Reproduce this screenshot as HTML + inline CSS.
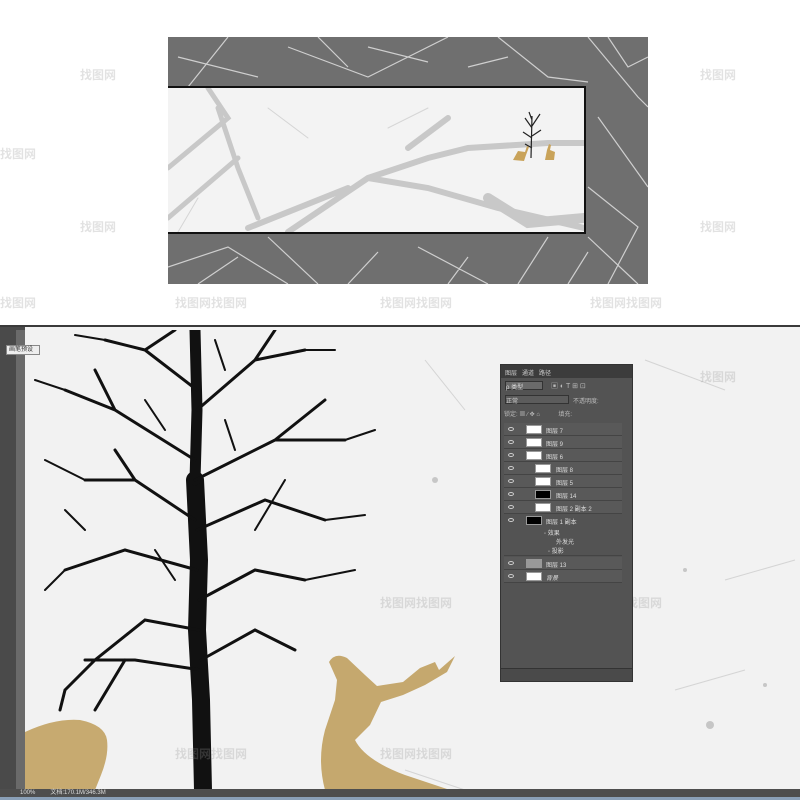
<!DOCTYPE html>
<html><head><meta charset="utf-8"><style>
*{margin:0;padding:0;box-sizing:border-box}
body{width:800px;height:800px;overflow:hidden;background:#fff;position:relative;font-family:"Liberation Sans","Noto Sans CJK SC",sans-serif}
.abs{position:absolute}
.wm{position:absolute;color:rgba(150,150,150,.28);font-size:12px;font-weight:bold}
.row{position:absolute;left:3px;width:118px;height:13px;border-bottom:1px solid #444;font-size:6px;color:#ddd;background:#595959}
.eye{position:absolute;left:4px;top:4px;width:6px;height:4px;border:1px solid #ccc;border-radius:50%}
.th{position:absolute;top:2px;width:16px;height:9px;background:#fff;border:1px solid #999}
</style></head><body>
<!-- top marble -->
<div class="abs" style="left:168px;top:37px;width:480px;height:247px;background:#6f6f6f"></div>
<svg class="abs" style="left:168px;top:37px" width="480" height="247" stroke="#cfcfcf" fill="none" stroke-width="1.2">
<path d="M420 0 L470 60 L480 70 M430 80 L480 150 M420 150 L470 190 L440 247 M420 200 L470 247 M60 0 L20 50 M120 10 L200 40 L280 0 M330 0 L380 40 L420 45 M250 210 L320 247 M100 200 L150 247 M0 230 L60 210 L120 247 M380 200 L350 247 M440 0 L460 30 L480 20 M10 20 L90 40 M150 0 L180 30 M200 10 L260 25 M300 30 L340 20 M30 247 L70 220 M180 247 L210 215 M280 247 L300 220 M400 247 L420 215"/>
</svg>
<div class="abs" style="left:168px;top:86px;width:418px;height:148px;background:#f3f3f3;border:2px solid #111;border-left:none"></div>
<svg class="abs" style="left:168px;top:88px" width="416" height="144" stroke="#c8c8c8" fill="none" stroke-linecap="round">
<path d="M0 80 L60 30 L40 0 M50 20 L70 80 L90 130 M0 130 L70 70" stroke-width="5"/>
<path d="M120 144 L200 90 L260 70 L300 60 L380 55 L416 55 M200 90 L260 100 L330 120 L416 140 M80 140 L180 100 M240 60 L280 30" stroke-width="6"/>
<path d="M320 110 L360 135 L416 130" stroke-width="10"/>
<path d="M100 20 L140 50 M30 110 L10 144 M220 40 L260 20" stroke-width="1" stroke="#d5d5d5"/>
</svg>
<svg class="abs" style="left:505px;top:108px" width="60" height="60"><path d="M26 50 L27 8 M27 20 L20 10 M27 18 L35 6 M27 30 L18 24 M27 28 L36 22 M27 12 L24 4 M27 40 L20 36" stroke="#222" stroke-width="1.2" fill="none"/><path d="M8 52 l5 -9 l7 1 l2 -6 l2 1 l-3 8 l-2 6z M40 52 l2 -10 l2 -6 l2 1 l-1 5 l5 2 l-1 8z" fill="#c9a35a"/></svg>
<!-- bottom -->
<div class="abs" style="left:0;top:325px;width:800px;height:2px;background:#3a3a3a"></div>
<div class="abs" style="left:0;top:327px;width:800px;height:470px;background:#f2f2f2"></div>
<div class="abs" style="left:0;top:327px;width:25px;height:462px;background:#4a4a4a"></div>
<div class="abs" style="left:16px;top:330px;width:9px;height:459px;background:#6a6a6a"></div>
<div class="abs" style="left:6px;top:345px;width:34px;height:10px;background:#eee;border:1px solid #888;font-size:6px;color:#333;line-height:8px;padding-left:2px">画笔预设</div>
<svg class="abs" style="left:25px;top:330px" width="775" height="460">
<g fill="#aaa" opacity=".6"><circle cx="410" cy="150" r="3"/><circle cx="685" cy="395" r="4"/><circle cx="740" cy="355" r="2"/><circle cx="660" cy="240" r="2"/></g>
<g stroke="#c8c8c8" fill="none" stroke-width="1" opacity=".7"><path d="M620 30 L700 60 M400 30 L440 80 M700 250 L770 230 M380 440 L440 460 M650 360 L720 340"/></g>
<g stroke="#111" fill="none" stroke-linecap="round">
<path d="M178 460 L176 370 L172 300 L174 230 L170 150" stroke-width="18"/>
<path d="M170 150 L172 80 L170 0" stroke-width="11"/>
<path d="M172 60 L120 20 M172 80 L230 30 L280 20 M170 130 L90 80 L40 60 M170 150 L250 110 L320 110 M170 190 L110 150 L60 150 M172 200 L240 170 L300 190 M172 240 L100 220 L40 240 M174 270 L230 240 L280 250 M174 300 L120 290 L70 330 L40 360 M176 340 L110 330 L60 330 M176 330 L230 300 L270 320 M120 20 L80 10 M230 30 L250 0 M120 20 L150 0 M90 80 L70 40 M250 110 L300 70 M110 150 L90 120 M40 360 L35 380 M100 330 L70 380" stroke-width="3"/>
<path d="M40 60 L10 50 M60 150 L20 130 M300 190 L340 185 M280 250 L330 240 M80 10 L50 5 M280 20 L310 20 M320 110 L350 100 M40 240 L20 260 M200 40 L190 10 M210 120 L200 90 M140 100 L120 70 M60 200 L40 180 M230 200 L260 150 M150 250 L130 220" stroke-width="2"/>
</g>
<path d="M0 402 Q30 388 55 390 Q80 395 82 410 Q84 425 76 445 L70 460 L0 460z" fill="#c7aa70"/>
<path d="M304 332 Q310 322 322 328 L340 345 L352 356 L378 352 L395 338 L410 332 L414 340 L430 326 L422 342 L400 355 L378 365 L356 372 L345 395 L330 410 Q340 430 380 445 L425 460 L300 460 Q292 430 300 400 L310 370 L312 350z" fill="#c5a86e"/>
</svg>
<!-- watermarks -->
<div class="wm" style="left:80px;top:66px">找图网</div><div class="wm" style="left:700px;top:66px">找图网</div>
<div class="wm" style="left:0;top:145px">找图网</div><div class="wm" style="left:80px;top:218px">找图网</div>
<div class="wm" style="left:0;top:294px">找图网</div><div class="wm" style="left:175px;top:294px">找图网找图网</div>
<div class="wm" style="left:380px;top:294px">找图网找图网</div><div class="wm" style="left:590px;top:294px">找图网找图网</div>
<div class="wm" style="left:700px;top:218px">找图网</div><div class="wm" style="left:700px;top:368px">找图网</div>
<div class="wm" style="left:380px;top:594px">找图网找图网</div><div class="wm" style="left:590px;top:594px">找图网找图网</div>
<div class="wm" style="left:175px;top:745px">找图网找图网</div><div class="wm" style="left:380px;top:745px">找图网找图网</div>
<!-- layers panel -->
<div class="abs" style="left:500px;top:364px;width:133px;height:318px;background:#535353;border:1px solid #333">
<div class="abs" style="left:0;top:0;width:131px;height:13px;background:#3c3c3c;font-size:6px;color:#ccc;padding:3px 4px">图层 &nbsp; 通道 &nbsp; 路径</div>
<div class="abs" style="left:4px;top:16px;width:38px;height:9px;background:#6a6a6a;border:1px solid #333;font-size:6px;color:#ddd">ρ 类型</div>
<div class="abs" style="left:50px;top:16px;font-size:7px;color:#bbb">▣ ◐ T ⊞ ⊡</div>
<div class="abs" style="left:4px;top:30px;width:64px;height:9px;background:#5c5c5c;border:1px solid #333;font-size:6px;color:#ccc">正常</div>
<div class="abs" style="left:72px;top:31px;font-size:6px;color:#bbb">不透明度:</div>
<div class="abs" style="left:3px;top:44px;font-size:6px;color:#bbb">锁定: ▦ ∕ ✥ ⌂ &nbsp; &nbsp; &nbsp; &nbsp; &nbsp; 填充:</div>
<div class="row" style="top:58px"><span class="eye"></span><span class="th" style="left:22px"></span><span class="abs" style="left:42px;top:3px">图层 7</span></div>
<div class="row" style="top:71px"><span class="eye"></span><span class="th" style="left:22px"></span><span class="abs" style="left:42px;top:3px">图层 9</span></div>
<div class="row" style="top:84px"><span class="eye"></span><span class="th" style="left:22px"></span><span class="abs" style="left:42px;top:3px">图层 6</span></div>
<div class="row" style="top:97px"><span class="eye"></span><span class="th" style="left:31px"></span><span class="abs" style="left:52px;top:3px">图层 8</span></div>
<div class="row" style="top:110px"><span class="eye"></span><span class="th" style="left:31px"></span><span class="abs" style="left:52px;top:3px">图层 5</span></div>
<div class="row" style="top:123px"><span class="eye"></span><span class="th" style="left:31px;background:#000"></span><span class="abs" style="left:52px;top:3px">图层 14</span></div>
<div class="row" style="top:136px"><span class="eye"></span><span class="th" style="left:31px"></span><span class="abs" style="left:52px;top:3px">图层 2 副本 2</span></div>
<div class="row" style="top:149px;height:42px;background:#535353"><span class="eye"></span><span class="th" style="left:22px;background:#000"></span><span class="abs" style="left:42px;top:3px">图层 1 副本</span><span class="abs" style="left:40px;top:14px">◦ 效果</span><span class="abs" style="left:52px;top:23px">外发光</span><span class="abs" style="left:44px;top:32px">◦ 投影</span></div>
<div class="row" style="top:192px"><span class="eye"></span><span class="th" style="left:22px;background:#999"></span><span class="abs" style="left:42px;top:3px">图层 13</span></div>
<div class="row" style="top:205px"><span class="eye"></span><span class="th" style="left:22px"></span><span class="abs" style="left:42px;top:3px;font-style:italic">背景</span></div>
<div class="abs" style="left:0;top:303px;width:131px;height:13px;background:#4a4a4a;border-top:1px solid #333"></div>
</div>
<!-- status bar -->
<div class="abs" style="left:0;top:789px;width:800px;height:8px;background:#4e4e4e;font-size:6px;color:#ddd;line-height:8px;padding-left:20px">100% &nbsp; &nbsp; &nbsp; &nbsp; 文档:170.1M/346.3M</div>
<div class="abs" style="left:0;top:797px;width:800px;height:3px;background:#8aa0b8"></div>
</body></html>
